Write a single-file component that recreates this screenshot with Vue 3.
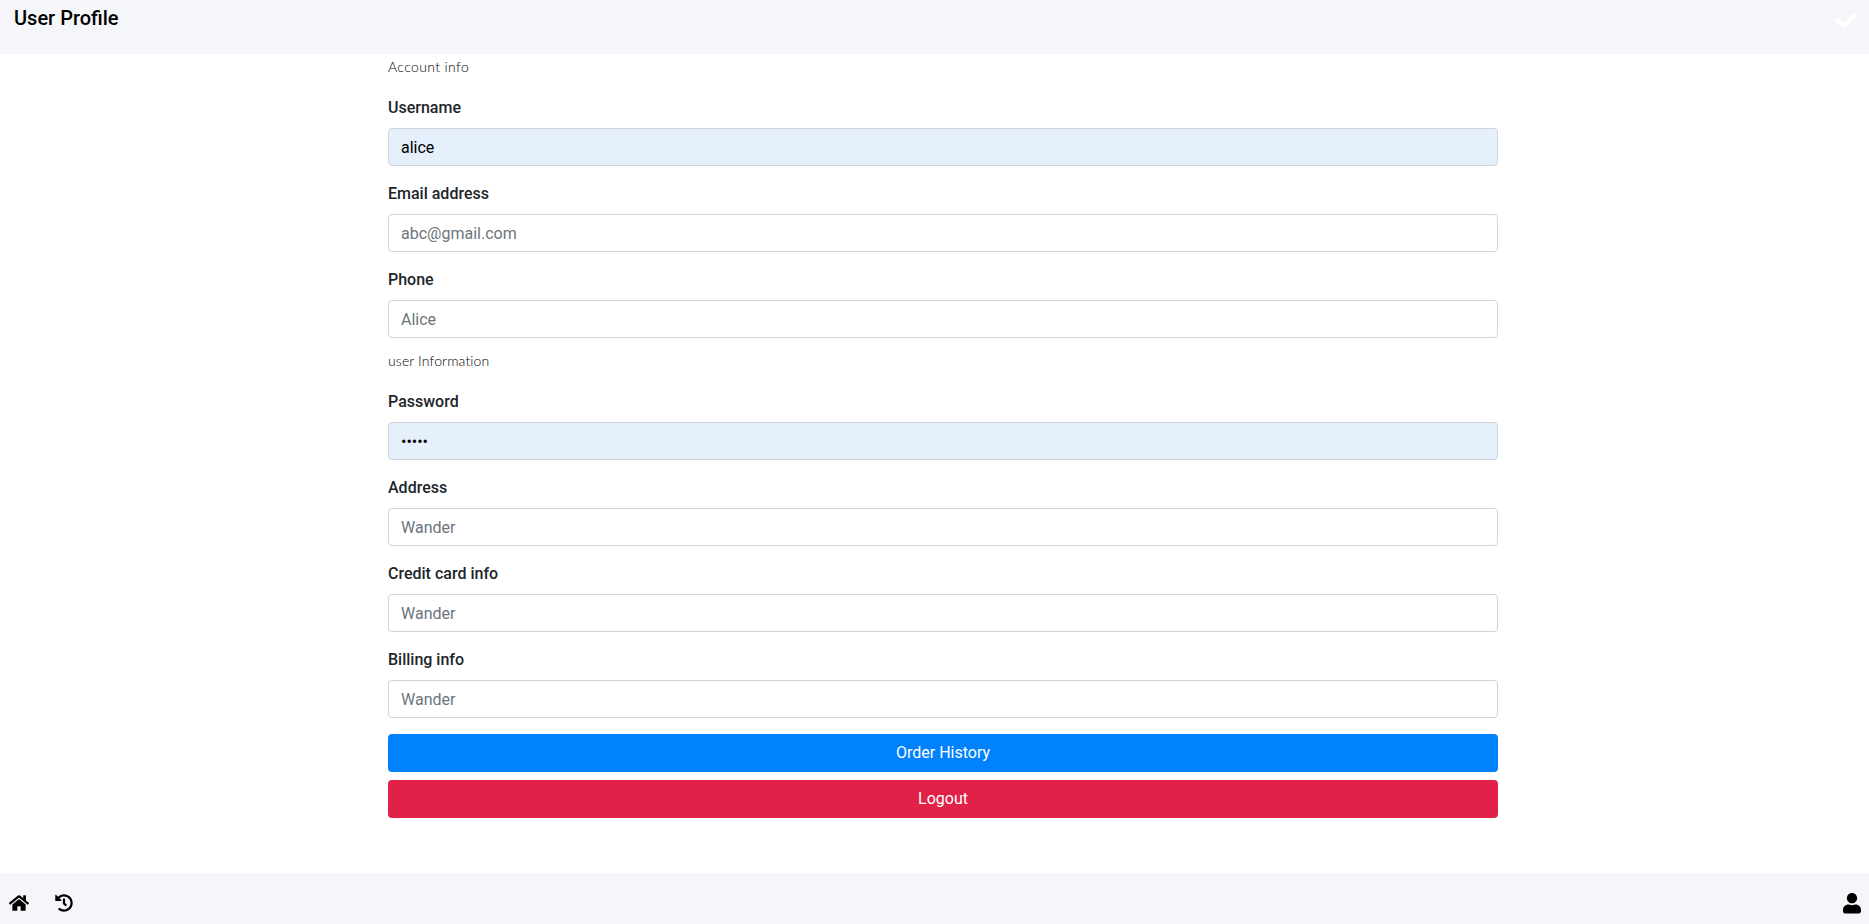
<script setup>
import { ref } from 'vue'

const sections = ref([
  {
    title: 'Account info',
    fields: [
      { id: 'username', label: 'Username', type: 'text', value: 'alice', placeholder: '', filled: true },
      { id: 'email', label: 'Email address', type: 'email', value: '', placeholder: 'abc@gmail.com' },
      { id: 'phone', label: 'Phone', type: 'text', value: '', placeholder: 'Alice' }
    ]
  },
  {
    title: 'user Information',
    fields: [
      { id: 'password', label: 'Password', type: 'password', value: 'alice', placeholder: '', filled: true },
      { id: 'address', label: 'Address', type: 'text', value: '', placeholder: 'Wander' },
      { id: 'card', label: 'Credit card info', type: 'text', value: '', placeholder: 'Wander' },
      { id: 'billing', label: 'Billing info', type: 'text', value: '', placeholder: 'Wander' }
    ]
  }
])
</script>

<template>
  <div class="page">
    <header class="topbar">
      <h1>User Profile</h1>
      <svg class="check" viewBox="0 0 512 512"><path d="M173.898 439.404l-166.4-166.4c-9.997-9.997-9.997-26.206 0-36.204l36.203-36.204c9.997-9.998 26.207-9.998 36.204 0L192 312.69 432.095 72.596c9.997-9.997 26.207-9.997 36.204 0l36.203 36.204c9.997 9.997 9.997 26.206 0 36.204l-294.4 294.401c-9.998 9.997-26.207 9.997-36.204-.001z" /></svg>
    </header>

    <main>
      <form @submit.prevent>
        <section v-for="(s, i) in sections" :key="s.title">
          <h2 :class="{ second: i === 1 }">{{ s.title }}</h2>
          <div v-for="f in s.fields" :key="f.id" class="group">
            <label :for="f.id">{{ f.label }}</label>
            <input :id="f.id" v-model="f.value" :type="f.type" :placeholder="f.placeholder" :class="{ filled: f.filled }" autocomplete="off" />
          </div>
        </section>
        <button type="button" class="history">Order History</button>
        <button type="button" class="logout">Logout</button>
      </form>
    </main>

    <footer class="bottombar">
      <svg class="home" viewBox="0 0 576 512"><path d="M280.37 148.26L96 300.11V464a16 16 0 0 0 16 16l112.06-.29a16 16 0 0 0 15.92-16V368a16 16 0 0 1 16-16h64a16 16 0 0 1 16 16v95.64a16 16 0 0 0 16 16.05L464 480a16 16 0 0 0 16-16V300L295.67 148.26a12.19 12.19 0 0 0-15.3 0zM571.6 251.47L488 182.56V44.05a12 12 0 0 0-12-12h-56a12 12 0 0 0-12 12v72.61L318.47 43a48 48 0 0 0-61 0L4.34 251.47a12 12 0 0 0-1.6 16.9l25.5 31A12 12 0 0 0 45.15 301l235.22-193.74a12.19 12.19 0 0 1 15.3 0L530.9 301a12 12 0 0 0 16.9-1.6l25.5-31a12 12 0 0 0-1.7-16.93z" /></svg>
      <svg class="clock" viewBox="0 0 512 512"><path d="M504 255.531c.253 136.64-111.18 248.372-247.82 248.468-59.015.042-113.223-20.53-155.822-54.911-11.077-8.94-11.905-25.541-1.839-35.607l11.267-11.267c8.609-8.609 22.353-9.551 31.891-1.984C173.062 425.135 212.781 440 256 440c101.705 0 184-82.311 184-184 0-101.705-82.311-184-184-184-48.814 0-93.149 18.969-126.068 49.932l50.754 50.754c10.08 10.08 2.941 27.314-11.313 27.314H24c-8.837 0-16-7.163-16-16V38.627c0-14.254 17.234-21.393 27.314-11.314l49.372 49.372C129.209 34.136 189.552 8 256 8c136.81 0 247.747 110.78 248 247.531zm-180.912 78.784l9.823-12.63c8.138-10.463 6.253-25.542-4.21-33.679L288 256.349V152c0-13.255-10.745-24-24-24h-16c-13.255 0-24 10.745-24 24v135.651l65.409 50.874c10.463 8.137 25.541 6.253 33.679-4.21z" /></svg>
      <svg class="user" viewBox="0 0 448 512"><path d="M224 256c70.7 0 128-57.3 128-128S294.7 0 224 0 96 57.3 96 128s57.3 128 128 128zm89.6 32h-16.7c-22.2 10.2-46.9 16-72.9 16s-50.6-5.8-72.9-16h-16.7C60.2 288 0 348.200 0 422.400V464c0 26.500 21.500 48 48 48h352c26.500 0 48-21.500 48-48v-41.600c0-74.200-60.200-134.400-134.400-134.400z" /></svg>
    </footer>
  </div>
</template>

<style>
body {
  margin: 0;
  background: #fff;
}
</style>

<style scoped>
.page {
  box-sizing: border-box;
  width: 100%;
  height: 924px;
  display: flex;
  flex-direction: column;
  overflow: hidden;
  font-family: Roboto, "Liberation Sans", sans-serif;
  font-size: 16px;
  line-height: 24px;
  color: #212529;
}
.topbar {
  box-sizing: border-box;
  height: 54px;
  flex: none;
  display: flex;
  justify-content: space-between;
  align-items: flex-start;
  padding: 6px 13px 0 14px;
  background: #f4f6fa;
}
h1 {
  margin: 0;
  font-size: 20px;
  line-height: 24px;
  font-weight: 500;
  color: #000;
}
.check {
  width: 20px;
  height: 20px;
  margin-top: 5px;
  fill: #fff;
}
main {
  flex: 1;
  padding-left: 388px;
}
form {
  width: 1110px;
}
h2 {
  height: 18px;
  margin: 4px 0 20px;
  font-family: Papyrus, Lato, sans-serif;
  font-size: 14px;
  line-height: 18px;
  font-weight: 300;
  letter-spacing: 0.37px;
  color: #000;
}
h2.second {
  margin-top: 14px;
  letter-spacing: 0.14px;
}
.group {
  margin-bottom: 16px;
}
section:first-child .group:last-child {
  margin-bottom: 0;
}
label {
  display: block;
  margin-bottom: 8px;
  font-weight: 500;
}
input {
  display: block;
  box-sizing: border-box;
  width: 100%;
  height: 38px;
  padding: 6px 12px;
  border: 1px solid #ced4da;
  border-radius: 4px;
  background: #fff;
  font: inherit;
  color: #000;
  outline: none;
}
input::placeholder {
  color: #6c757d;
  opacity: 1;
}
input.filled {
  background: #e6f0fd;
}
button {
  display: block;
  width: 100%;
  height: 38px;
  margin: 0 0 8px;
  padding: 0 12px;
  border: 0;
  border-radius: 4px;
  font: inherit;
  color: #fff;
}
.history {
  background: #0082fe;
}
.logout {
  background: #e22149;
}
.bottombar {
  box-sizing: border-box;
  height: 51px;
  flex: none;
  display: flex;
  align-items: flex-start;
  padding: 20px 8px 0 9px;
  background: #f4f6fa;
}
.bottombar svg {
  fill: #000;
}
.home {
  width: 20px;
  height: 18px;
  margin-top: 1px;
}
.clock {
  width: 18px;
  height: 18px;
  margin: 1px 0 0 26px;
}
.user {
  width: 18px;
  height: 20.5px;
  margin-left: auto;
}
</style>
